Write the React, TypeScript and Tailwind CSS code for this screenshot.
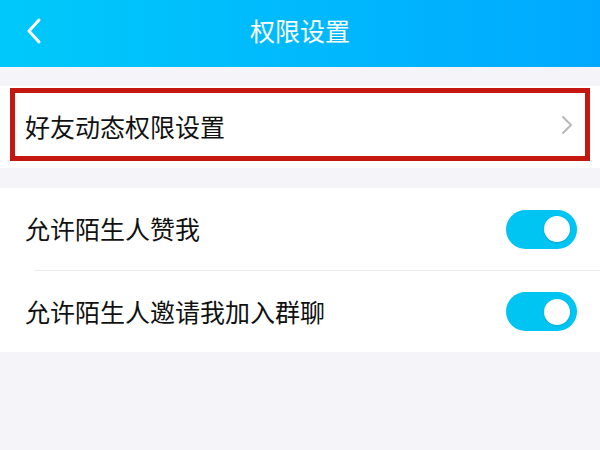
import React from "react";

const font = { fontFamily: '"Noto Sans CJK SC", "Noto Sans", sans-serif' };

const Toggle = () => (
  <div className="flex h-[39px] w-[71px] items-center justify-end rounded-full bg-[#00c4f2] pr-[7px]">
    <div className="h-[26px] w-[26px] rounded-full bg-white shadow-[0_1px_2px_rgba(0,0,0,0.15)]" />
  </div>
);

export default function App() {
  return (
    <div className="flex h-[450px] w-[600px] flex-col bg-[#f5f5f9]" style={font}>
      {/* 顶部导航 */}
      <div className="relative flex h-[67px] items-center justify-center bg-gradient-to-r from-[#00c9fa] to-[#00a9ff] pb-[6px]">
        <svg className="absolute left-[24px] top-[17px]" width="20" height="28" viewBox="0 0 20 28">
          <path d="M15 3 L5 14 L15 25" fill="none" stroke="white" strokeWidth="3" strokeLinecap="round" strokeLinejoin="round" />
        </svg>
        <span className="text-[25px] leading-none text-white">权限设置</span>
      </div>

      {/* 好友动态 */}
      <div className="mt-[19px] bg-white">
        <div className="mx-[10px] my-[2px] flex h-[73px] items-center justify-between border-[5px] border-[#c3170f] pl-[10px] pr-[12px]">
          <span className="mt-[4px] text-[25px] text-[#111]">好友动态权限设置</span>
          <svg width="12" height="20" viewBox="0 0 12 20">
            <path d="M2 2 L10 10 L2 18" fill="none" stroke="#b8b8bc" strokeWidth="2" strokeLinecap="round" strokeLinejoin="round" />
          </svg>
        </div>
        <div className="h-[5px]" />
      </div>

      {/* 陌生人设置 */}
      <div className="mt-[20px] bg-white">
        <div className="flex h-[82px] items-center justify-between pl-[25px] pr-[23px]">
          <span className="text-[25px] text-[#111]">允许陌生人赞我</span>
          <Toggle />
        </div>
        <div className="ml-[35px] h-px bg-[#ececf0]" />
        <div className="flex h-[81px] items-center justify-between pl-[25px] pr-[23px]">
          <span className="text-[25px] text-[#111]">允许陌生人邀请我加入群聊</span>
          <Toggle />
        </div>
      </div>
    </div>
  );
}
